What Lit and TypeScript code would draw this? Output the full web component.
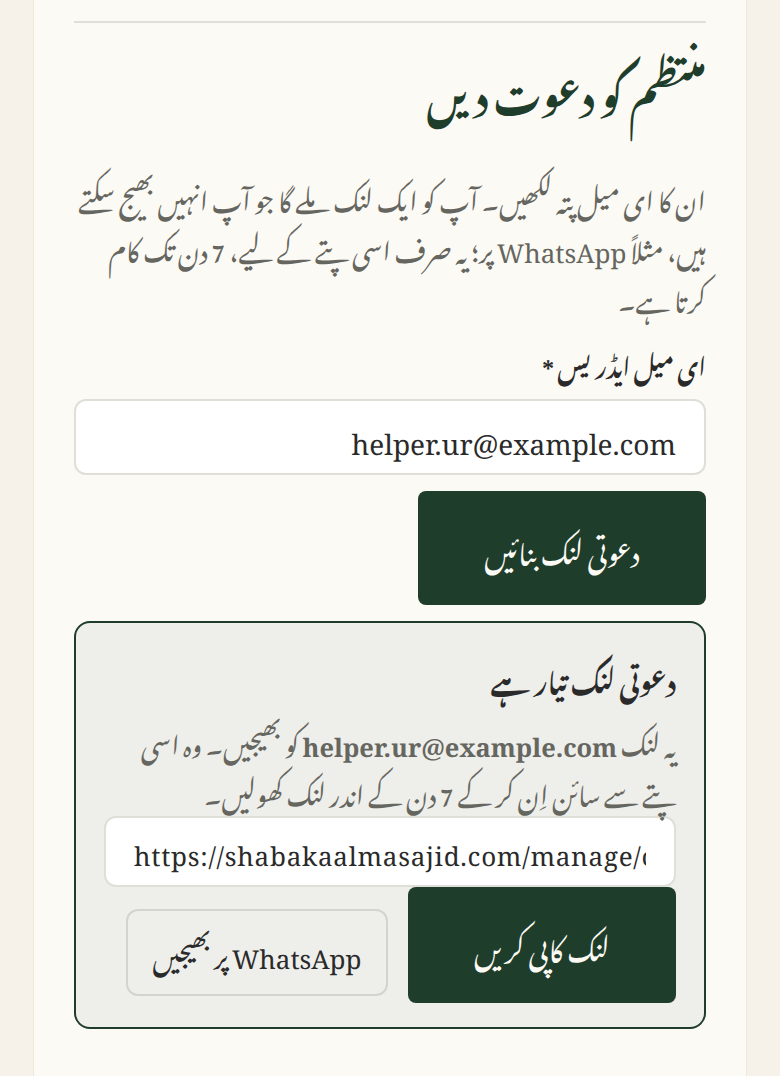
import { LitElement, html, css } from "lit";
import { customElement } from "lit/decorators.js";

@customElement("app-root")
export class AppRoot extends LitElement {
  static styles = css`
    :host {
      display: block;
      height: 1076px;
      overflow: hidden;
      background: #f6f2ea;
      font-family: "Noto Nastaliq Urdu", "Noto Serif", serif;
      color: #2a2a2a;
      font-kerning: normal;
      text-rendering: geometricPrecision;
    }
    .sheet {
      margin: 0 33px;
      height: 1076px;
      box-sizing: border-box;
      padding: 21px 40px 0;
      background: #fcfaf5;
      border: solid #f0e8d8;
      border-width: 0 1px;
      direction: rtl;
    }
    .rule { height: 2px; background: #dfdfd8; }
    h2 {
      margin: 29px 0 0;
      font-size: 38.4px;
      line-height: 77px;
      font-weight: 700;
      color: #1f3d2b;
    }
    .lead {
      margin: 43px 0 0;
      font-size: 26px;
      line-height: 50px;
      color: #666660;
    }
    label {
      display: block;
      margin-top: 19px;
      font-size: 23.3px;
      line-height: 44px;
      font-weight: 700;
    }
    input {
      display: block;
      box-sizing: border-box;
      width: 100%;
      background: #fff;
      border: 2px solid #dfdfd8;
      border-radius: 12px;
      color: #2a2a2a;
      font-family: "Noto Serif", serif;
      outline: none;
      font-kerning: normal;
      text-rendering: geometricPrecision;
    }
    .email {
      margin-top: 14px;
      height: 76px;
      padding: 16px 28px 0;
      font-size: 28px;
      direction: ltr;
      text-align: right;
    }
    button {
      box-sizing: border-box;
      font-family: inherit;
      cursor: pointer;
      text-rendering: geometricPrecision;
    }
    .primary {
      background: #1f3d2b;
      color: #fcfaf5;
      border: 0;
      border-radius: 8px;
      font-size: 28px;
    }
    .make {
      display: block;
      margin-top: 16px;
      width: 288px;
      height: 114px;
    }
    .result {
      box-sizing: border-box;
      margin-top: 16px;
      height: 408px;
      padding: 30px 28px 0;
      background: #eeeeea;
      border: 2px solid #1f3d2b;
      border-radius: 16px;
    }
    h3 {
      margin: 0 0 13px;
      font-size: 26.6px;
      line-height: 50px;
      font-weight: 700;
    }
    .note {
      margin: 0;
      font-size: 26px;
      line-height: 50px;
      color: #666660;
    }
    .note b { font-size: 25.4px; line-height: 1; font-family: "Noto Serif", serif; }
    .url {
      height: 71px;
      padding: 8px 28px 0;
      font-size: 26px;
      letter-spacing: 0.74px;
      direction: ltr;
    }
    .actions {
      display: flex;
      gap: 20px;
      align-items: flex-start;
    }
    .copy { width: 268px; height: 116px; }
    .wa {
      margin-top: 22px;
      width: 262px;
      height: 87px;
      background: transparent;
      border: 2px solid #d4d4cf;
      border-radius: 12px;
      color: #2a2a2a;
      font-size: 26px;
    }
  `;

  render() {
    return html`<div class="sheet">
      <div class="rule"></div>
      <h2>منتظم کو دعوت دیں</h2>
      <p class="lead">ان کا ای میل پتہ لکھیں۔ آپ کو ایک لنک ملے گا جو آپ انہیں بھیج سکتے ہیں، مثلاً WhatsApp پر؛ یہ صرف اسی پتے کے لیے، 7 دن تک کام کرتا ہے۔</p>
      <label for="email">ای میل ایڈریس *</label>
      <input id="email" class="email" type="email" .value=${"helper.ur@example.com"} />
      <button class="primary make">دعوتی لنک بنائیں</button>
      <section class="result">
        <h3>دعوتی لنک تیار ہے</h3>
        <p class="note">یہ لنک <b>helper.ur@example.com</b> کو بھیجیں۔ وہ اسی پتے سے سائن اِن کر کے 7 دن کے اندر لنک کھولیں۔</p>
        <input class="url" readonly .value=${"https://shabakaalmasajid.com/manage/claim/a81f4c"} />
        <div class="actions">
          <button class="primary copy">لنک کاپی کریں</button>
          <button class="wa">WhatsApp پر بھیجیں</button>
        </div>
      </section>
    </div>`;
  }
}
